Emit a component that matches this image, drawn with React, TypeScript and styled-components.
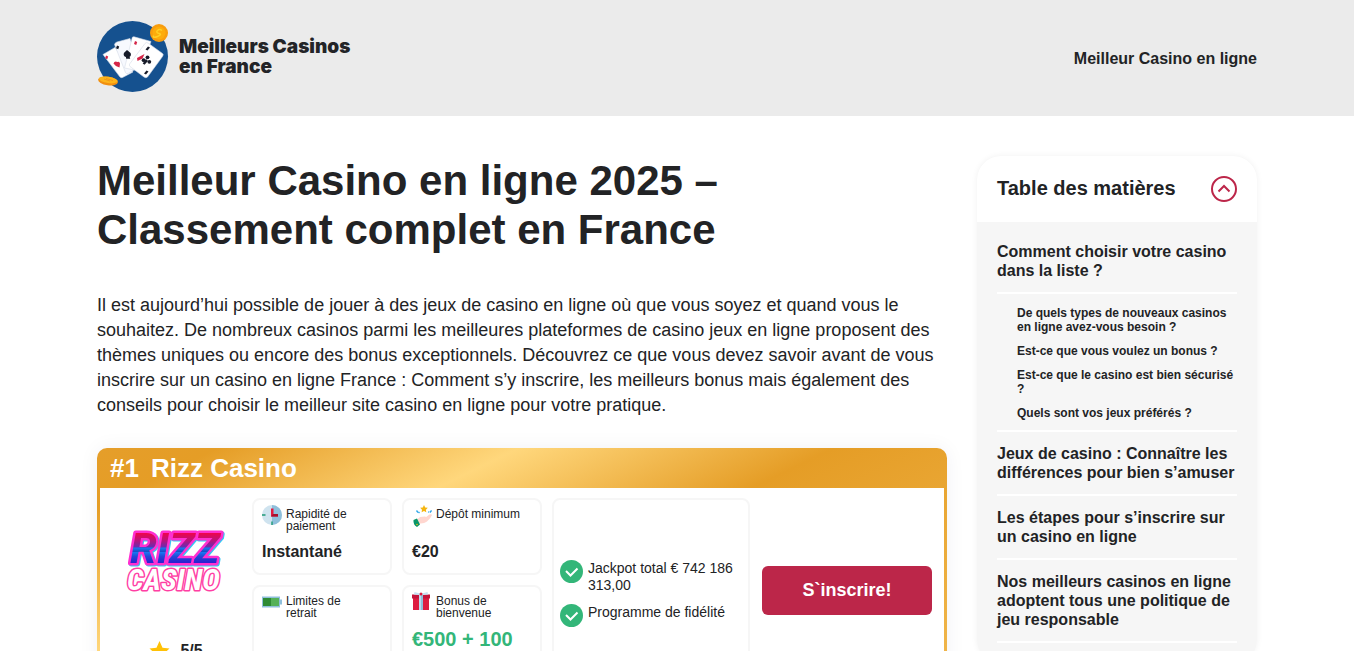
import React, { useState } from 'react';
import styled, { createGlobalStyle } from 'styled-components';

const GlobalStyle = createGlobalStyle`
  *, *::before, *::after { box-sizing: border-box; }
  body {
    margin: 0;
    background: #fff;
    color: #222325;
    font-family: "Liberation Sans", Arial, sans-serif;
  }
  h1, h2, p, ul { margin: 0; padding: 0; }
  ul { list-style: none; }
  a { color: inherit; text-decoration: none; }
`;

const Page = styled.div`
  height: 100vh;
  padding-right: 12px;
  overflow-y: auto;
  scrollbar-width: none;
`;

const Container = styled.div`
  max-width: 1200px;
  margin: 0 auto;
  padding: 0 20px;
`;

const Header = styled.header`
  background: #ebebeb;
`;

const HeaderRow = styled(Container)`
  display: flex;
  align-items: center;
  justify-content: space-between;
  min-height: 116px;
  padding-top: 2px;
`;

const LogoLink = styled.a`
  display: flex;
  padding-bottom: 4px;
`;

const NavLink = styled.a`
  font-size: 16px;
  line-height: 18px;
  font-weight: 700;
`;

const Columns = styled(Container)`
  display: grid;
  grid-template-columns: minmax(0, 1fr) 280px;
  gap: 30px;
  align-items: start;
  padding-top: 40px;
  padding-bottom: 40px;
`;

const Title = styled.h1`
  margin-bottom: 39px;
  font-size: 42px;
  line-height: 49px;
  font-weight: 700;
`;

const Intro = styled.p`
  margin-bottom: 30px;
  font-size: 18px;
  line-height: 25px;
`;

const Card = styled.section`
  padding: 0 3px 3px;
  border-radius: 10px;
  background: linear-gradient(154deg, #e59e2a 0, #e59d26 53px, #ffd77c 185px, #e59d26 323px, #ffd77c 900px);
  box-shadow: 0 0 20px rgba(34, 35, 80, 0.06);
`;

const CardTitle = styled.h2`
  display: flex;
  gap: 12px;
  padding: 5px 10px;
  color: #fff;
  font-size: 26px;
  line-height: 30px;
  font-weight: 700;
`;

const CardBody = styled.div`
  display: grid;
  grid-template-columns: 132px 290px 198px 1fr;
  gap: 10px;
  padding: 10px;
  border-radius: 0 0 8px 8px;
  background: #fff;
`;

const Brand = styled.div`
  display: flex;
  flex-direction: column;
  align-items: center;
  gap: 20px;
`;

const BrandLogo = styled.a`
  display: flex;
  align-items: center;
  height: 122px;
`;

const Rating = styled.div`
  display: flex;
  align-items: center;
  gap: 10px;
  font-size: 16px;
  line-height: 22px;
  font-weight: 700;
`;

const Facts = styled.div`
  display: grid;
  grid-template-columns: 1fr 1fr;
  gap: 10px;
`;

const Box = styled.div`
  border: 2px solid #f6f6f6;
  border-radius: 8px;
`;

const Fact = styled(Box)`
  min-height: 77px;
  padding: 5px 8px 7px;
`;

const FactHead = styled.div`
  display: flex;
  gap: 4px;
  min-height: 36px;
`;

const FactLabel = styled.span`
  max-width: 86px;
  padding-top: 3px;
  font-size: 12px;
  line-height: 12px;
`;

const FactValue = styled.div<{ $bonus?: boolean }>`
  color: ${(p) => (p.$bonus ? '#33b679' : 'inherit')};
  font-size: ${(p) => (p.$bonus ? 20 : 16)}px;
  line-height: ${(p) => (p.$bonus ? 23 : 22)}px;
  font-weight: 700;
`;

const Perks = styled(Box)`
  display: flex;
  align-items: center;
  padding: 6px 6px 0;
`;

const PerkList = styled.ul`
  display: grid;
  gap: 10px;
`;

const Perk = styled.li`
  display: flex;
  gap: 5px;
  font-size: 14px;
  line-height: 17px;

  svg { flex: none; }
`;

const Cta = styled.div`
  display: flex;
  align-items: center;
  padding: 0 2px;
`;

const SignUp = styled.button`
  width: 100%;
  padding: 14px 10px;
  border: 0;
  border-radius: 6px;
  background: #bc2649;
  color: #fff;
  font-family: inherit;
  font-size: 18px;
  line-height: 21px;
  font-weight: 700;
  cursor: pointer;
`;

const Toc = styled.aside`
  overflow: hidden;
  border-radius: 24px;
  background: #f6f6f6;
  box-shadow: 0 0 6px rgba(0, 0, 0, 0.06);
`;

const TocHead = styled.div`
  display: flex;
  align-items: center;
  justify-content: space-between;
  padding: 20px;
  background: #fff;
`;

const TocTitle = styled.h2`
  padding-bottom: 2px;
  font-size: 20px;
  line-height: 24px;
  font-weight: 700;
`;

const TocToggle = styled.button`
  display: flex;
  align-items: center;
  justify-content: center;
  width: 26px;
  height: 26px;
  padding: 0;
  border: 2px solid #bc2649;
  border-radius: 50%;
  background: none;
  cursor: pointer;
`;

const TocList = styled.ul`
  padding: 8px 20px 20px;
`;

const TocItem = styled.li`
  font-size: 16px;
  line-height: 19px;
  font-weight: 700;
`;

const TocLink = styled.a`
  display: block;
  padding: 12px 0;
  border-bottom: 2px solid #fff;
`;

const SubList = styled.ul`
  display: grid;
  gap: 10px;
  padding: 12px 0 10px 20px;
  border-bottom: 2px solid #fff;
  font-size: 12px;
  line-height: 14px;
`;

const SiteLogo = () => (
  <svg width="260" height="72" viewBox="0 0 260 72" role="img" aria-label="Meilleurs Casinos en France">
    <circle cx="35.500" cy="35.500" r="35.500" fill="#15518f" />
    <g stroke="#d5dbe8" strokeWidth=".6" strokeLinejoin="round">
      <path d="M6 33.500 18 26.500 36 51 25.500 56.500Q24 57 23 56Z" fill="#fff" />
      <path d="M17.500 23.500Q18 21.500 20 21L33 17.500 42 46 31 52.500Q29 53 28.500 51.500Z" fill="#f7f9fe" />
      <path d="M35 17.500Q35 15.500 37 15.800L54 20.500 43 50 27.500 47Z" fill="#fff" />
      <path d="M48 22.500Q49 20.800 51 22L65.500 32.500Q67 33.500 65.500 35.500L50.500 56Q49 57.500 47 56L33 45.500Q31.500 44 33 42.500Z" fill="#fff" />
    </g>
    <g fill="#171b29">
      <path d="m30 29 3.600 3q1 2.800-1 3.800l.6 2h-4l-.3-1.800q-3-.8-2-4z" />
      <circle cx="50.500" cy="36.300" r="1.900" /><circle cx="46.600" cy="39.200" r="1.900" /><circle cx="52.300" cy="40.800" r="1.900" />
      <path d="m49 38 2 2-3.500 3.800-1.800-1.300z" />
      <path d="m20 24.500 2.200 1-1 2.800-2.200-1zM51 25.500l2 1-2.500 3-2-1zM49.500 49.500l2 1-2.500 3-2-1z" />
    </g>
    <g fill="#d52648">
      <path d="M16.500 42.500q1-3 4-1.500 2-1 2.500 1.500l-.5 4q-4-.8-6-4zM40 37l7.500-4-2 4.500-5 2.500z" />
      <path d="m9 34.500 2.200 1-1 2.800-2-1zM38 20l2.200 1-1 3-2.200-1z" />
    </g>
    <circle cx="62" cy="12" r="9" fill="#f89d0e" />
    <circle cx="62" cy="12" r="6.500" fill="#fdac0c" />
    <path d="M65 9.500q-2.500-2-4.500 0t1.500 3-1.500 3-4-1" fill="none" stroke="#ffd025" strokeWidth="1.500" />
    <ellipse cx="11" cy="60" rx="10" ry="4.300" transform="rotate(8 11 60)" fill="#f18f10" />
    <ellipse cx="11.300" cy="58.900" rx="9.500" ry="3.200" transform="rotate(8 11 59)" fill="#fdb41a" />
    <path d="m7 58 6 2m-4-2.500 7 2" stroke="#ef9819" strokeWidth="1" />
    <g fill="#232427" fontFamily="Inter, sans-serif" fontWeight="900" fontSize="19">
      <text x="82" y="32">Meilleurs Casinos</text>
      <text x="82" y="52">en France</text>
    </g>
  </svg>
);

const BrandSvg = styled.svg`
  overflow: visible;
  font-weight: 700;
  font-style: italic;
  stroke-linejoin: round;
`;

const BrandTop = styled.text`
  font-family: Roboto, sans-serif;
  font-size: 43px;
  fill: url(#rizzFill);
  stroke: #ff2fd0;
  stroke-width: 5px;
  paint-order: stroke;
  filter: drop-shadow(1px 1px 0 #35c8f4);
`;

const BrandBottom = styled.text`
  font-family: "Liberation Sans Narrow", "Roboto Condensed", sans-serif;
  font-size: 30px;
  fill: #fff;
  stroke: #ff3fa4;
  stroke-width: 3px;
  paint-order: stroke;
`;

const RizzLogo = () => (
  <BrandSvg width="104" height="90" viewBox="0 0 104 90" role="img" aria-label="Rizz Casino">
    <defs>
      <linearGradient id="rizzFill" x1="0" y1="17" x2="0" y2="49" gradientUnits="userSpaceOnUse">
        <stop offset="0" stopColor="#ff003c" />
        <stop offset=".3" stopColor="#b8137c" />
        <stop offset=".5" stopColor="#6a2bb0" />
        <stop offset=".53" stopColor="#1876f0" />
        <stop offset=".64" stopColor="#174fc8" />
        <stop offset=".67" stopColor="#1876f0" />
        <stop offset=".8" stopColor="#2147d8" />
        <stop offset="1" stopColor="#2a1fd0" />
      </linearGradient>
    </defs>
    <BrandTop x="6" y="49">RIZZ</BrandTop>
    <BrandBottom x="3" y="76">CASINO</BrandBottom>
  </BrandSvg>
);

const ClockIcon = () => (
  <svg width="20" height="20" viewBox="0 0 20 20" aria-hidden="true">
    <circle cx="10" cy="10" r="10" fill="#cfe3ef" />
    <path d="M10 0a10 10 0 0 1 0 20z" fill="#8fbfdb" />
    <path d="M0 9.300h3.500v1.400H0zM9.300 16.500h1.400V20H9.300z" fill="#1f9b78" />
    <path d="M9 3.500h2.500V9H16v2.500H9z" fill="#e3173e" />
    <path d="M11 9h5v2.500H9z" fill="#a8102c" />
  </svg>
);

const HandIcon = () => (
  <svg width="20" height="23" viewBox="0 0 20 23" aria-hidden="true">
    <path d="m12 0 1.200 2.400 2.600.4-1.900 1.900.4 2.600-2.300-1.200-2.400 1.200.4-2.600L8.200 2.800l2.600-.4z" fill="#f5b50f" />
    <path d="m4.500 5.500 1.500 2m.5-.5 1 1M19.500 5.500l-1.500 2m-1-1-.7 1" stroke="#2ba5e8" strokeWidth="1.300" fill="none" />
    <path d="M4 15.500 8 12l5-.5q1.500.3.800 1.500l-2.300 1 6-4.500q2-.8 2.500.5-1 3-5 6.500-3 2.500-8 2z" fill="#ffd6cf" />
    <path d="m1.500 15 3.500-1.500L8 19.500l-3 2.500Q1 20 1.500 15z" fill="#089668" />
    <circle cx="5" cy="19.500" r=".8" fill="#f5b50f" />
  </svg>
);

const CashIcon = () => (
  <svg width="20" height="22" viewBox="0 0 20 22" aria-hidden="true">
    <path d="M0 4.500h18v3h2v5h-2v3H0z" fill="#8fbfdb" />
    <path d="M1 6h8v8H1z" fill="#2e8b34" />
    <path d="M9 6h8v8H9z" fill="#55b158" />
  </svg>
);

const GiftIcon = () => (
  <svg width="20" height="20" viewBox="0 0 20 20" aria-hidden="true">
    <path d="M1 5h16v13H1z" fill="#dd1c40" />
    <path d="M0 2.500h18v4H0z" fill="#c3143a" />
    <path d="M7 2.500h4V18H7z" fill="#bcdcee" />
    <path d="M9 2.500h2V18H9z" fill="#8fbfdb" />
    <path d="M2.500 0 9 1.800 15.500 0l.5 2.500-7 .7-7-.7z" fill="#c5e2f2" />
    <circle cx="9" cy="2" r="1.500" fill="#dd1c40" />
  </svg>
);

const StarIcon = () => (
  <svg width="21" height="20" viewBox="0 0 21 20" aria-hidden="true">
    <path d="m10.500 0 3 6.800 7 .7-5.300 4.900 1.600 7.100-6.300-3.800-6.300 3.800 1.600-7.100L.5 7.500l7-.7z" fill="#ffc107" />
  </svg>
);

const CheckIcon = () => (
  <svg width="23" height="23" viewBox="0 0 23 23" aria-hidden="true">
    <circle cx="11.500" cy="11.500" r="11.500" fill="#33b679" />
    <path d="m6 11 4.500 4.500L17.500 8.500" fill="none" stroke="#fff" strokeWidth="2" />
  </svg>
);

const facts = [
  { icon: <ClockIcon />, label: 'Rapidité de paiement', value: 'Instantané' },
  { icon: <HandIcon />, label: 'Dépôt minimum', value: '€20' },
  { icon: <CashIcon />, label: 'Limites de retrait', value: '' },
  { icon: <GiftIcon />, label: 'Bonus de bienvenue', value: '€500 + 100 FS', bonus: true },
];

const perks = ['Jackpot total € 742 186 313,00', 'Programme de fidélité'];

const sections = [
  {
    text: 'Comment choisir votre casino dans la liste ?',
    children: [
      'De quels types de nouveaux casinos en ligne avez-vous besoin ?',
      'Est-ce que vous voulez un bonus ?',
      'Est-ce que le casino est bien sécurisé ?',
      'Quels sont vos jeux préférés ?',
    ],
  },
  { text: 'Jeux de casino : Connaître les différences pour bien s’amuser' },
  { text: 'Les étapes pour s’inscrire sur un casino en ligne' },
  { text: 'Nos meilleurs casinos en ligne adoptent tous une politique de jeu responsable' },
];

export default function App() {
  const [open, setOpen] = useState(true);

  return (
    <Page>
      <GlobalStyle />
      <Header>
        <HeaderRow>
          <LogoLink href="#"><SiteLogo /></LogoLink>
          <nav><NavLink href="#">Meilleur Casino en ligne</NavLink></nav>
        </HeaderRow>
      </Header>
      <Columns>
        <main>
          <Title>Meilleur Casino en ligne 2025 – Classement complet en France</Title>
          <Intro>
            Il est aujourd’hui possible de jouer à des jeux de casino en ligne où que vous soyez et quand vous le
            souhaitez. De nombreux casinos parmi les meilleures plateformes de casino jeux en ligne proposent des
            thèmes uniques ou encore des bonus exceptionnels. Découvrez ce que vous devez savoir avant de vous
            inscrire sur un casino en ligne France : Comment s’y inscrire, les meilleurs bonus mais également des
            conseils pour choisir le meilleur site casino en ligne pour votre pratique.
          </Intro>
          <Card>
            <CardTitle><span>#1</span><span>Rizz Casino</span></CardTitle>
            <CardBody>
              <Brand>
                <BrandLogo href="#"><RizzLogo /></BrandLogo>
                <Rating><StarIcon />5/5</Rating>
              </Brand>
              <Facts>
                {facts.map((fact) => (
                  <Fact key={fact.label}>
                    <FactHead>{fact.icon}<FactLabel>{fact.label}</FactLabel></FactHead>
                    <FactValue $bonus={fact.bonus}>{fact.value}</FactValue>
                  </Fact>
                ))}
              </Facts>
              <Perks>
                <PerkList>
                  {perks.map((perk) => (
                    <Perk key={perk}><CheckIcon /><span>{perk}</span></Perk>
                  ))}
                </PerkList>
              </Perks>
              <Cta><SignUp type="button">S`inscrire!</SignUp></Cta>
            </CardBody>
          </Card>
        </main>
        <Toc>
          <TocHead>
            <TocTitle>Table des matières</TocTitle>
            <TocToggle type="button" aria-label="Table des matières" aria-expanded={open} onClick={() => setOpen(!open)}>
              <svg width="14" height="14" viewBox="0 0 14 14" aria-hidden="true">
                <path d={open ? 'm1.500 9.500 5.500-5.500 5.500 5.500' : 'm1.500 4.500 5.500 5.500 5.500-5.500'} fill="none" stroke="#bc2649" strokeWidth="2" />
              </svg>
            </TocToggle>
          </TocHead>
          {open && (
            <TocList>
              {sections.map((section) => (
                <TocItem key={section.text}>
                  <TocLink href="#">{section.text}</TocLink>
                  {section.children && (
                    <SubList>
                      {section.children.map((child) => (
                        <li key={child}><a href="#">{child}</a></li>
                      ))}
                    </SubList>
                  )}
                </TocItem>
              ))}
            </TocList>
          )}
        </Toc>
      </Columns>
    </Page>
  );
}
